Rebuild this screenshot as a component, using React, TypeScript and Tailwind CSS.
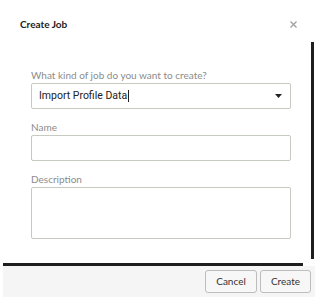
import React from "react";

const Field = ({ label, children, top }: { label: string; children: React.ReactNode; top?: boolean }) => {
  return (
    <div className={top ? "flex flex-col" : "flex flex-col mt-[10px]"}>
      <label className="text-[10px] leading-[16px] text-[#8c8c8c]">{label}</label>
      {children}
    </div>
  );
};

export default function App() {
  return (
    <div className="w-[318px] h-[300px] bg-white rounded-tr-[4px] overflow-hidden flex flex-col font-['Lato','Open_Sans',sans-serif]">
      {/* header */}
      <div className="h-[42px] flex items-start justify-between pl-[20px] pr-[21px] pt-[17px]">
        <h2 className="text-[10px] leading-[14px] font-bold text-[#222]">Create Job</h2>
        <button className="mt-[4px] text-[#a0a0a0]">
          <svg width="7" height="7" viewBox="0 0 7 7" fill="none" stroke="currentColor" strokeWidth="1.3">
            <path d="M0.5 0.5L6.5 6.5M6.5 0.5L0.5 6.5" />
          </svg>
        </button>
      </div>

      {/* body + scrollbar */}
      <div className="flex h-[221px]">
        <div className="flex-1 pl-[31px] pr-[20px] pt-[25px]">
          <Field label="What kind of job do you want to create?" top>
            <div className="h-[26px] border border-[#c6cbc2] rounded-[2px] flex items-center justify-between pl-[7px] pr-[7px]">
              <span className="text-[10.5px] text-[#222] font-['Roboto',sans-serif] flex items-center">
                Import Profile Data
                <span className="inline-block w-px h-[12px] bg-[#222] ml-px" />
              </span>
              <svg width="7" height="4" viewBox="0 0 7 4" className="mr-[1px]">
                <path d="M0 0H7L3.5 4Z" fill="#222" />
              </svg>
            </div>
          </Field>
          <Field label="Name">
            <input className="h-[26px] border border-[#c6cbc2] rounded-[2px] outline-none" />
          </Field>
          <Field label="Description">
            <textarea className="h-[52px] border border-[#c6cbc2] rounded-[2px] outline-none resize-none" />
          </Field>
        </div>
        <div className="w-[7px] flex flex-col">
          <div className="w-[3px] h-[217px] bg-[#1e1e1e]" />
        </div>
      </div>

      {/* horizontal scrollbar */}
      <div className="ml-[3px] w-[300px] h-[3px] bg-[#1e1e1e]" />

      {/* footer */}
      <div className="mx-[3px] h-[31px] bg-[#f5f5f5] flex items-center justify-end gap-[3px] pr-[4px]">
        <button className="w-[52px] h-[23px] border border-[#bdbdbd] rounded-[3px] bg-[#f7f7f7] text-[10px] text-[#333]">
          Cancel
        </button>
        <button className="w-[51px] h-[23px] border border-[#bdbdbd] rounded-[3px] bg-[#f7f7f7] text-[10px] text-[#333]">
          Create
        </button>
      </div>
    </div>
  );
}
